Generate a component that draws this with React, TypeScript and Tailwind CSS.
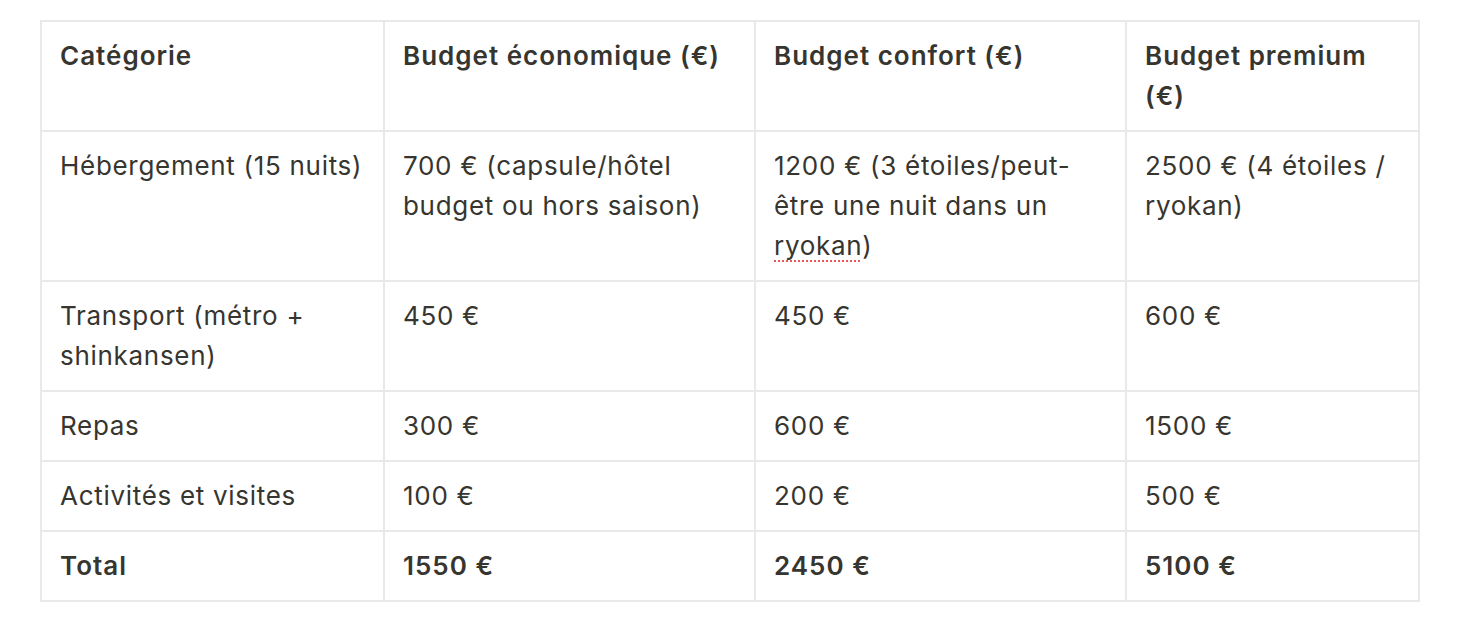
export default function App() {
  const rows: { cat: string; eco: React.ReactNode; comfort: React.ReactNode; premium: React.ReactNode; bold?: boolean }[] = [
    {
      cat: 'Hébergement (15 nuits)',
      eco: '700 € (capsule/hôtel budget ou hors saison)',
      comfort: (
        <>
          1200 € (3 étoiles/peut-être une nuit dans un{' '}
          <span className="underline decoration-dotted decoration-[#eb5757] decoration-2 underline-offset-[5px]">ryokan</span>)
        </>
      ),
      premium: '2500 € (4 étoiles / ryokan)',
    },
    { cat: 'Transport (métro + shinkansen)', eco: '450 €', comfort: '450 €', premium: '600 €' },
    { cat: 'Repas', eco: '300 €', comfort: '600 €', premium: '1500 €' },
    { cat: 'Activités et visites', eco: '100 €', comfort: '200 €', premium: '500 €' },
    { cat: 'Total', eco: '1550 €', comfort: '2450 €', premium: '5100 €', bold: true },
  ];

  const cell = 'border-2 border-[#e9e9e7] align-top pl-[18px] pr-[14px] py-[14px]';

  return (
    <div className="min-h-screen bg-white pl-[40px] pt-[20px] font-['Inter',sans-serif] text-[26px] leading-[40px] tracking-[0.7px] text-[#37352f]">
      <table className="table-fixed border-collapse w-[1378px]">
        <colgroup>
          <col className="w-[343px]" />
          <col className="w-[371px]" />
          <col className="w-[371px]" />
          <col className="w-[293px]" />
        </colgroup>
        <thead>
          <tr className="text-left">
            <th className={cell + ' font-semibold tracking-[1px]'}>Catégorie</th>
            <th className={cell + ' font-semibold tracking-[1px]'}>Budget économique (€)</th>
            <th className={cell + ' font-semibold tracking-[1px]'}>Budget confort (€)</th>
            <th className={cell + ' font-semibold tracking-[1px]'}>Budget premium (€)</th>
          </tr>
        </thead>
        <tbody>
          {rows.map((r) => (
            <tr key={r.cat} className={r.bold ? 'font-semibold tracking-[1px]' : ''}>
              <td className={cell}>{r.cat}</td>
              <td className={cell}>{r.eco}</td>
              <td className={cell}>{r.comfort}</td>
              <td className={cell}>{r.premium}</td>
            </tr>
          ))}
        </tbody>
      </table>
    </div>
  );
}
